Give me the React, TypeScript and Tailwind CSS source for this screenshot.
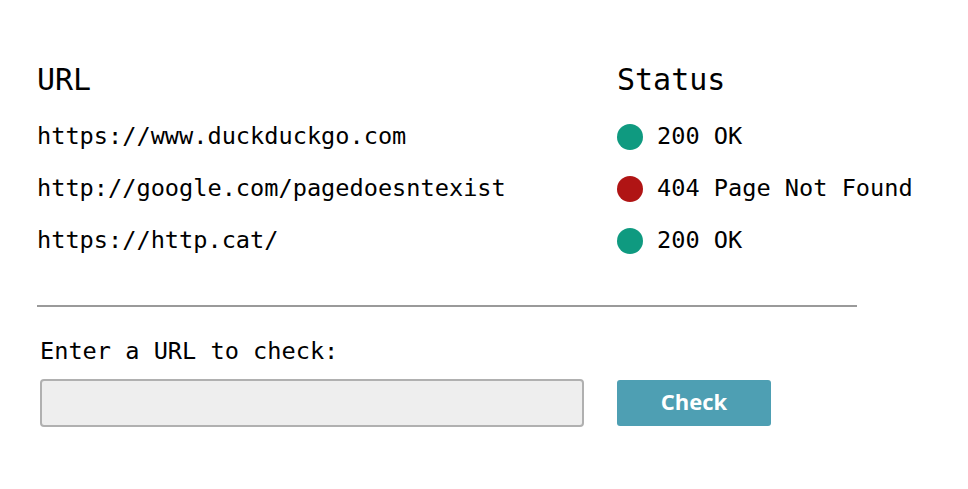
import React from 'react'

const rows = [
  { url: 'https://www.duckduckgo.com', status: '200 OK', ok: true },
  { url: 'http://google.com/pagedoesntexist', status: '404 Page Not Found', ok: false },
  { url: 'https://http.cat/', status: '200 OK', ok: true },
]

export default function App() {
  return (
    <div className="w-[968px] h-[489px] bg-white text-black font-['DejaVu_Sans_Mono',monospace] pt-[58px] pl-[37px]">
      {/* table */}
      <div className="grid grid-cols-[580px_auto]">
        <div className="text-[30px] leading-[44px] pb-[9px]">URL</div>
        <div className="text-[30px] leading-[44px] pb-[9px]">Status</div>
        {rows.map((r) => (
          <React.Fragment key={r.url}>
            <div className="text-[23.6px] h-[52px] flex items-center">{r.url}</div>
            <div className="text-[23.6px] h-[52px] flex items-center gap-[14px]">
              <span
                className={
                  r.ok
                    ? 'w-[26px] h-[26px] rounded-full bg-[#0f9a80]'
                    : 'w-[26px] h-[26px] rounded-full bg-[#b01414]'
                }
              />
              {r.status}
            </div>
          </React.Fragment>
        ))}
      </div>

      <div className="w-[820px] h-[2px] bg-[#9a9a9a] mt-[38px]" />

      {/* form */}
      <div className="pl-[3px] mt-[28px]">
        <div className="text-[23.6px] leading-[32px]">Enter a URL to check:</div>
        <div className="flex items-center gap-[33px] mt-[12px]">
          <input
            className="w-[544px] h-[48px] bg-[#eeeeee] border-2 border-[#b0b0b0] rounded-[4px] outline-none"
            type="text"
          />
          <button className="w-[154px] h-[46px] pb-[3px] bg-[#4e9fb3] rounded-[3px] text-white font-['Open_Sans',sans-serif] font-bold text-[22px]">
            Check
          </button>
        </div>
      </div>
    </div>
  )
}
